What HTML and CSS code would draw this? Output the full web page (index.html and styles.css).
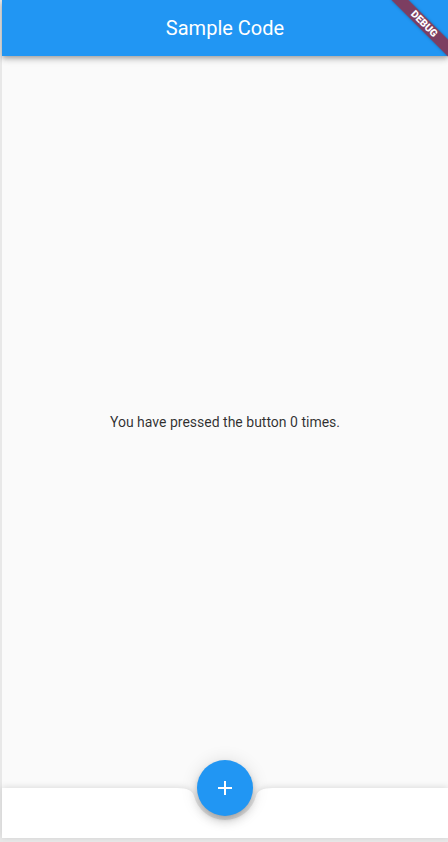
FILE: index.html
```html
<!DOCTYPE html>
<html>
<head>
<meta charset="utf-8">
<link rel="stylesheet" href="styles.css">
</head>
<body>
<div class="screen">
  <header class="appbar"><span class="title">Sample Code</span></header>
  <main class="content"><p class="counter">You have pressed the button 0 times.</p></main>
  <footer class="bottombar">
    <svg class="bar-shape" width="446" height="50" viewBox="0 0 446 50">
      <path d="M0,0 L175,0 Q190,0 191.97,7.82 A32,32 0 0 0 254.03,7.82 Q256,0 271,0 L446,0 L446,50 L0,50 Z" fill="#ffffff"/>
    </svg>
    <button class="fab" aria-label="Increment">
      <svg width="24" height="24" viewBox="0 0 24 24"><path d="M19 13h-6v6h-2v-6H5v-2h6V5h2v6h6v2z" fill="#ffffff"/></svg>
    </button>
  </footer>
</div>
<div class="banner"><span>DEBUG</span></div>
</body>
</html>
```
FILE: styles.css
```css
html, body {
  margin: 0;
  padding: 0;
}
body {
  width: 448px;
  height: 842px;
  overflow: hidden;
  background: #e8e8e8;
  position: relative;
  font-family: Roboto, "Noto Sans", sans-serif;
}
.screen {
  margin-left: 2px;
  width: 446px;
  height: 838px;
  background: #fafafa;
  display: flex;
  flex-direction: column;
}
.appbar {
  height: 56px;
  flex: 0 0 56px;
  background: #2196f3;
  display: flex;
  align-items: center;
  justify-content: center;
  box-shadow: 0 2px 4px -1px rgba(0,0,0,0.2), 0 4px 5px 0 rgba(0,0,0,0.14), 0 1px 10px 0 rgba(0,0,0,0.12);
  position: relative;
  z-index: 2;
}
.title {
  color: #ffffff;
  font-size: 20px;
  font-weight: 400;
  line-height: 24px;
}
.content {
  flex: 1;
  display: flex;
  align-items: center;
  justify-content: center;
}
.counter {
  margin: 0;
  font-size: 14px;
  line-height: 20px;
  color: rgba(0,0,0,0.82);
}
.bottombar {
  flex: 0 0 50px;
  height: 50px;
  position: relative;
}
.bar-shape {
  display: block;
  overflow: visible;
  filter: drop-shadow(0 -1px 3px rgba(0,0,0,0.12));
}
.fab {
  position: absolute;
  left: 195px;
  top: -28px;
  width: 56px;
  height: 56px;
  border-radius: 50%;
  border: none;
  padding: 0;
  background: #2196f3;
  display: flex;
  align-items: center;
  justify-content: center;
  box-shadow: 0 3px 5px -1px rgba(0,0,0,0.2), 0 6px 10px 0 rgba(0,0,0,0.14), 0 1px 18px 0 rgba(0,0,0,0.12);
}
.fab svg {
  display: block;
}
.banner {
  position: absolute;
  left: 384px;
  top: 18px;
  width: 80px;
  height: 12px;
  background: rgba(160,28,40,0.72);
  transform: rotate(45deg);
  box-shadow: 0 0 3px rgba(0,0,0,0.3);
  display: flex;
  align-items: center;
  justify-content: center;
  z-index: 5;
}
.banner span {
  color: #ffffff;
  font-family: Roboto, "Noto Sans", sans-serif;
  font-size: 10.2px;
  font-weight: 900;
  line-height: 12px;
}
```
